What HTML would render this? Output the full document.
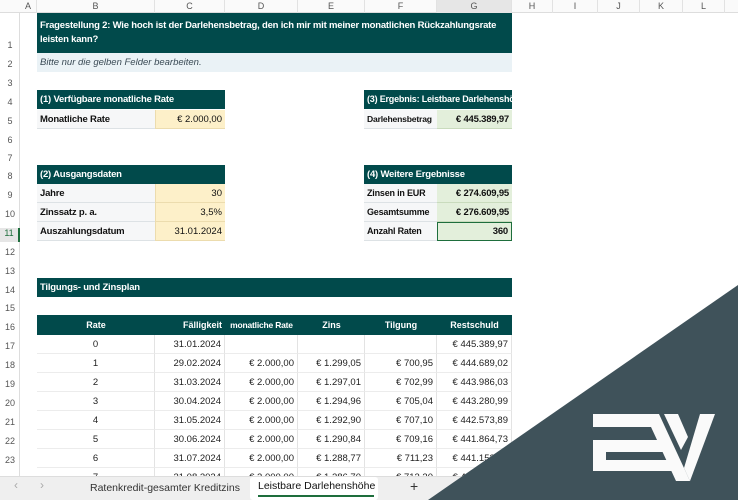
<!DOCTYPE html>
<html><head><meta charset="utf-8"><style>
*{margin:0;padding:0;box-sizing:border-box}
body{width:738px;height:500px;overflow:hidden;background:#fff;font-family:"Liberation Sans",sans-serif;position:relative;color:#111}
.a{position:absolute;white-space:nowrap;overflow:hidden}
.ch{top:0;height:13px;font-size:9px;color:#555;text-align:center;line-height:13px;border-right:1px solid #e2e2e2}
.rn{left:0;width:20px;font-size:9px;color:#555;text-align:center}
.t{background:#014a4b;color:#fff;font-weight:bold;font-size:9.5px;padding-left:3px;letter-spacing:-0.2px}
.l{background:#f6f7f8;font-weight:bold;font-size:9.5px;padding-left:3px;border-bottom:1px solid #dde2e5;letter-spacing:-0.2px}
.y{background:#fdf0c9;font-size:9.5px;text-align:right;padding-right:3px;border-bottom:1px solid #ecdcae;border-left:1px solid #ecdcae}
.g{background:#e3efdb;font-size:9.5px;font-weight:bold;text-align:right;padding-right:3px;border-bottom:1px solid #c9dbbd;letter-spacing:-0.2px}
.c{font-size:9.5px;text-align:right;padding-right:3px;border-right:1px solid #e3e3e3;border-bottom:1px solid #ececec;color:#222}
</style></head><body>
<div class="a" style="left:0;top:0;width:738px;height:13px;background:#fafafa;border-bottom:1px solid #ddd"></div>
<div class="a ch" style="left:20px;width:17px">A</div>
<div class="a ch" style="left:37px;width:118px">B</div>
<div class="a ch" style="left:155px;width:70px">C</div>
<div class="a ch" style="left:225px;width:73px">D</div>
<div class="a ch" style="left:298px;width:67px">E</div>
<div class="a ch" style="left:365px;width:72px">F</div>
<div class="a ch" style="left:437px;width:75px;background:#e6e6e6">G</div>
<div class="a ch" style="left:512px;width:41px">H</div>
<div class="a ch" style="left:553px;width:45px">I</div>
<div class="a ch" style="left:598px;width:42px">J</div>
<div class="a ch" style="left:640px;width:43px">K</div>
<div class="a ch" style="left:683px;width:42px">L</div>
<div class="a" style="left:19px;top:13px;width:1px;height:463px;background:#ddd"></div>

<div class="a rn" style="top:40px">1</div>
<div class="a rn" style="top:59px">2</div>
<div class="a rn" style="top:78px">3</div>
<div class="a rn" style="top:97px">4</div>
<div class="a rn" style="top:116px">5</div>
<div class="a rn" style="top:135px">6</div>
<div class="a rn" style="top:153px">7</div>
<div class="a rn" style="top:171px">8</div>
<div class="a rn" style="top:190px">9</div>
<div class="a rn" style="top:209px">10</div>
<div class="a rn" style="top:228px;color:#1e6e3c;background:#e6e6e6;border-right:2px solid #1e6e3c;height:14px">11</div>
<div class="a rn" style="top:247px">12</div>
<div class="a rn" style="top:266px">13</div>
<div class="a rn" style="top:285px">14</div>
<div class="a rn" style="top:303px">15</div>
<div class="a rn" style="top:322px">16</div>
<div class="a rn" style="top:341px">17</div>
<div class="a rn" style="top:360px">18</div>
<div class="a rn" style="top:379px">19</div>
<div class="a rn" style="top:398px">20</div>
<div class="a rn" style="top:417px">21</div>
<div class="a rn" style="top:436px">22</div>
<div class="a rn" style="top:455px">23</div>

<div class="a t" style="left:37px;top:13px;width:475px;height:40px;line-height:14px;padding-top:6px">Fragestellung 2: Wie hoch ist der Darlehensbetrag, den ich mir mit meiner monatlichen Rückzahlungsrate<br>leisten kann?</div>
<div class="a" style="left:37px;top:53px;width:475px;height:19px;background:#eaf2f6;font-style:italic;font-size:9.5px;color:#3a4a55;line-height:19px;padding-left:3px">Bitte nur die gelben Felder bearbeiten.</div>

<div class="a t" style="left:37px;top:90px;width:188px;height:19px;line-height:19px">(1) Verfügbare monatliche Rate</div>
<div class="a l" style="left:37px;top:110px;width:118px;height:19px;line-height:19px">Monatliche Rate</div>
<div class="a y" style="left:155px;top:110px;width:70px;height:19px;line-height:19px">€ 2.000,00</div>

<div class="a t" style="left:37px;top:165px;width:188px;height:19px;line-height:19px">(2) Ausgangsdaten</div>
<div class="a l" style="left:37px;top:184px;width:118px;height:19px;line-height:19px">Jahre</div>
<div class="a y" style="left:155px;top:184px;width:70px;height:19px;line-height:19px">30</div>
<div class="a l" style="left:37px;top:203px;width:118px;height:19px;line-height:19px">Zinssatz p. a.</div>
<div class="a y" style="left:155px;top:203px;width:70px;height:19px;line-height:19px">3,5%</div>
<div class="a l" style="left:37px;top:222px;width:118px;height:19px;line-height:19px">Auszahlungsdatum</div>
<div class="a y" style="left:155px;top:222px;width:70px;height:19px;line-height:19px">31.01.2024</div>

<div class="a t" style="left:364px;top:90px;width:148px;height:19px;line-height:19px;font-size:9px">(3) Ergebnis: Leistbare Darlehenshöhe</div>
<div class="a l" style="left:364px;top:110px;width:73px;height:19px;line-height:19px;font-size:8.6px">Darlehensbetrag</div>
<div class="a g" style="left:437px;top:110px;width:75px;height:19px;line-height:19px">€ 445.389,97</div>

<div class="a t" style="left:364px;top:165px;width:148px;height:19px;line-height:19px">(4) Weitere Ergebnisse</div>
<div class="a l" style="left:364px;top:184px;width:73px;height:19px;line-height:19px;font-size:9px">Zinsen in EUR</div>
<div class="a g" style="left:437px;top:184px;width:75px;height:19px;line-height:19px">€ 274.609,95</div>
<div class="a l" style="left:364px;top:203px;width:73px;height:19px;line-height:19px;font-size:9px">Gesamtsumme</div>
<div class="a g" style="left:437px;top:203px;width:75px;height:19px;line-height:19px">€ 276.609,95</div>
<div class="a l" style="left:364px;top:222px;width:73px;height:19px;line-height:19px;font-size:9px">Anzahl Raten</div>
<div class="a g" style="left:437px;top:222px;width:75px;height:19px;line-height:17px;border:1.5px solid #1e6e3c">360</div>

<div class="a t" style="left:37px;top:278px;width:475px;height:19px;line-height:19px">Tilgungs- und Zinsplan</div>

<div class="a t" style="left:37px;top:315px;width:475px;height:20px"></div>
<div class="a" style="left:37px;top:315px;width:118px;height:20px;line-height:20px;text-align:center;color:#fff;font-weight:bold;font-size:9px">Rate</div>
<div class="a" style="left:155px;top:315px;width:70px;height:20px;line-height:20px;text-align:right;padding-right:3px;color:#fff;font-weight:bold;font-size:9px">Fälligkeit</div>
<div class="a" style="left:225px;top:315px;width:73px;height:20px;line-height:20px;text-align:center;color:#fff;font-weight:bold;font-size:8.5px;letter-spacing:-0.2px">monatliche Rate</div>
<div class="a" style="left:298px;top:315px;width:67px;height:20px;line-height:20px;text-align:center;color:#fff;font-weight:bold;font-size:9px">Zins</div>
<div class="a" style="left:365px;top:315px;width:72px;height:20px;line-height:20px;text-align:center;color:#fff;font-weight:bold;font-size:9px">Tilgung</div>
<div class="a" style="left:437px;top:315px;width:75px;height:20px;line-height:20px;text-align:center;color:#fff;font-weight:bold;font-size:9px">Restschuld</div>

<div id="rows"></div>
<script>
var d=[["0","31.01.2024","","","","€ 445.389,97"],["1","29.02.2024","€ 2.000,00","€ 1.299,05","€ 700,95","€ 444.689,02"],["2","31.03.2024","€ 2.000,00","€ 1.297,01","€ 702,99","€ 443.986,03"],["3","30.04.2024","€ 2.000,00","€ 1.294,96","€ 705,04","€ 443.280,99"],["4","31.05.2024","€ 2.000,00","€ 1.292,90","€ 707,10","€ 442.573,89"],["5","30.06.2024","€ 2.000,00","€ 1.290,84","€ 709,16","€ 441.864,73"],["6","31.07.2024","€ 2.000,00","€ 1.288,77","€ 711,23","€ 441.153,50"],["7","31.08.2024","€ 2.000,00","€ 1.286,70","€ 713,30","€ 440.440,20"]];
var xs=[37,155,225,298,365,437],ws=[118,70,73,67,72,75],h="";
d.forEach(function(r,i){var y=335+i*19;r.forEach(function(v,j){h+='<div class="a c" style="left:'+xs[j]+'px;top:'+y+'px;width:'+ws[j]+'px;height:19px;line-height:19px;'+(j==0?'text-align:center;padding:0':'')+'">'+v+'</div>';});});
document.getElementById("rows").innerHTML=h;
</script>

<div class="a" style="left:0;top:476px;width:738px;height:24px;background:#efefef;border-top:1px solid #ddd"></div>
<div class="a" style="left:14px;top:478px;font-size:12px;color:#aaa">&lsaquo;</div>
<div class="a" style="left:40px;top:478px;font-size:12px;color:#aaa">&rsaquo;</div>
<div class="a" style="left:90px;top:482px;font-size:10.5px;color:#333">Ratenkredit-gesamter Kreditzins</div>
<div class="a" style="left:250px;top:477px;width:128px;height:23px;background:#fff;border-radius:3px"></div>
<div class="a" style="left:258px;top:480px;font-size:10.5px;color:#111">Leistbare Darlehenshöhe</div>
<div class="a" style="left:258px;top:495px;width:116px;height:2px;background:#1e6e3c"></div>
<div class="a" style="left:410px;top:478px;font-size:14px;color:#333">+</div>

<svg class="a" style="left:0;top:0" width="738" height="500" viewBox="0 0 738 500">
<polygon points="738,285 738,500 428,500" fill="#3f525a"/>
<g fill="#fafafa">
<polygon points="593,414 650,414 656,427 593,427"/>
<polygon points="593,440 660,440 664,452 606,452 606,460 668,460 672,471 593,471"/>
<polygon points="645,414 659,414 690,481 676,481"/>
<polygon points="664,414 678,414 688,437 681,450"/>
<polygon points="700,414 715,414 690,481 684,468"/>
</g>
</svg>
</body></html>
